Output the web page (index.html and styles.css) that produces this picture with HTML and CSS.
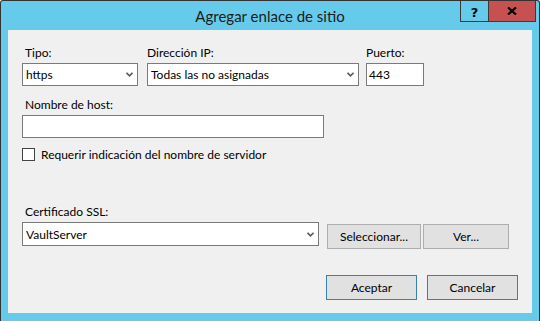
FILE: index.html
```html
<!DOCTYPE html>
<html lang="es">
<head>
    <meta charset="UTF-8">
    <title>Agregar enlace de sitio</title>
    <link rel="stylesheet" href="styles.css">
</head>
<body>
<div class="window">
    <div class="titlebar">
        <div class="title">Agregar enlace de sitio</div>
        <div class="caption-buttons">
            <div class="cap-btn cap-help">?</div>
            <div class="cap-btn cap-close">
                <svg width="10" height="8" viewBox="0 0 10 8">
                    <path d="M1 0.5 L9 7.5 M9 0.5 L1 7.5" stroke="#000" stroke-width="2.2" fill="none"/>
                </svg>
            </div>
        </div>
    </div>

    <div class="client">
        <div class="row-top">
            <div class="field field-tipo">
                <div class="label indent">Tipo:</div>
                <div class="combo">
                    <span>https</span>
                    <svg class="chevron" width="7" height="5" viewBox="0 0 7 5"><polyline points="0.5,0.8 3.5,3.8 6.5,0.8" stroke="#5a5a5a" stroke-width="1.6" fill="none"/></svg>
                </div>
            </div>
            <div class="field field-ip">
                <div class="label">Dirección IP:</div>
                <div class="combo">
                    <span>Todas las no asignadas</span>
                    <svg class="chevron" width="7" height="5" viewBox="0 0 7 5"><polyline points="0.5,0.8 3.5,3.8 6.5,0.8" stroke="#5a5a5a" stroke-width="1.6" fill="none"/></svg>
                </div>
            </div>
            <div class="field field-port">
                <div class="label">Puerto:</div>
                <div class="textbox">443</div>
            </div>
        </div>

        <div class="field field-host">
            <div class="label indent">Nombre de host:</div>
            <div class="textbox"></div>
        </div>

        <div class="check-row">
            <span class="checkbox"></span>
            <span>Requerir indicación del nombre de servidor</span>
        </div>

        <div class="field field-ssl">
            <div class="label indent">Certificado SSL:</div>
            <div class="ssl-row">
                <div class="combo combo-ssl">
                    <span>VaultServer</span>
                    <svg class="chevron" width="7" height="5" viewBox="0 0 7 5"><polyline points="0.5,0.8 3.5,3.8 6.5,0.8" stroke="#5a5a5a" stroke-width="1.6" fill="none"/></svg>
                </div>
                <div class="button btn-select">Seleccionar...</div>
                <div class="button btn-view">Ver...</div>
            </div>
        </div>

        <div class="dialog-buttons">
            <div class="button btn-ok">Aceptar</div>
            <div class="button btn-cancel">Cancelar</div>
        </div>
    </div>
</div>
</body>
</html>
```

FILE: styles.css
```css
body {
    margin: 0;
    font-family: "Segoe UI", Lato, "Noto Sans", sans-serif;
    font-size: 12px;
    color: #000;
}

.window {
    box-sizing: border-box;
    width: 540px;
    height: 321px;
    background: #66cbea;
    border: 1px solid #333;
    border-bottom: none;
    border-radius: 3px 3px 0 0;
    padding: 0 7px 8px;
    display: flex;
    flex-direction: column;
}

/* title bar */
.titlebar {
    height: 29px;
    margin: 0 -7px;
    display: grid;
    grid-template-columns: 1fr auto 1fr;
}

.title {
    grid-column: 2;
    align-self: center;
    font-size: 15px;
    color: #1b1b1b;
    padding-top: 1px;
}

.caption-buttons {
    grid-column: 3;
    justify-self: end;
    align-self: start;
    display: flex;
    height: 20px;
    border: 1px solid #3a3a3a;
    border-top: none;
    margin-right: 3px;
}

.cap-btn {
    display: flex;
    align-items: center;
    justify-content: center;
}

.cap-help {
    width: 27px;
    font-family: "DejaVu Sans", sans-serif;
    font-weight: bold;
    font-size: 13px;
    padding-top: 2px;
    box-sizing: border-box;
}

.cap-close {
    width: 46px;
    background: #c75050;
    border-left: 1px solid #3a3a3a;
}

/* client area */
.client {
    flex: 1;
    background: #f0f0f0;
    display: flex;
    flex-direction: column;
    padding: 15px 14px 13px;
}

.label {
    line-height: 15px;
    margin-bottom: 3px;
}

.label.indent {
    padding-left: 3px;
}

.row-top {
    display: flex;
}

.field-tipo { width: 116px; }
.field-ip { width: 212px; margin-left: 9px; }
.field-port { width: 58px; margin-left: 7px; }

.combo, .textbox {
    box-sizing: border-box;
    height: 23px;
    border: 1px solid #7a7a7a;
    background: #fff;
    display: flex;
    align-items: center;
    padding: 0 4px 0 3px;
}

.combo {
    justify-content: space-between;
}

.textbox {
    padding-left: 2px;
}

.field-host {
    margin-top: 11px;
    width: 302px;
}

.check-row {
    margin-top: 10px;
    display: flex;
    align-items: center;
    gap: 6px;
    height: 13px;
}

.checkbox {
    box-sizing: border-box;
    width: 13px;
    height: 13px;
    border: 1px solid #444;
    background: #fff;
}

.field-ssl {
    margin-top: 43px;
}

.ssl-row {
    display: flex;
    align-items: flex-start;
}

.combo-ssl {
    width: 297px;
    height: 24px;
    margin-right: 8px;
}

.button {
    box-sizing: border-box;
    height: 25px;
    border: 1px solid #adadad;
    background: #e1e1e1;
    display: flex;
    align-items: center;
    justify-content: center;
}

.btn-select {
    width: 94px;
    margin-top: 2px;
}

.btn-view {
    width: 86px;
    margin-top: 2px;
    margin-left: 2px;
}

.dialog-buttons {
    margin-top: auto;
    display: flex;
    justify-content: flex-end;
    gap: 10px;
}

.btn-ok, .btn-cancel {
    width: 91px;
}

.btn-ok {
    border-color: #3c7fb1;
}

.btn-cancel {
    border-color: #707070;
}
```
